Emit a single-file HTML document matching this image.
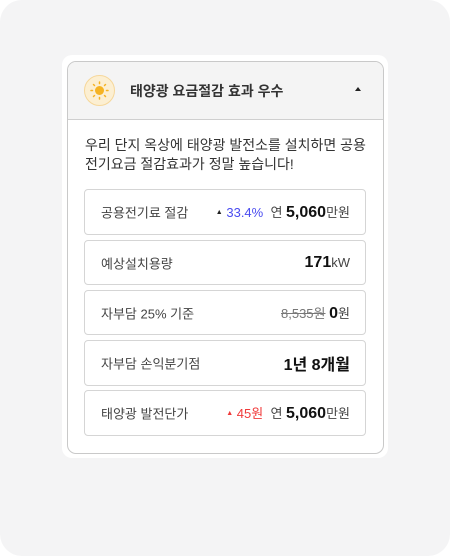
<!DOCTYPE html>
<html><head><meta charset="utf-8"><style>
*{box-sizing:border-box;margin:0;padding:0}
html,body{width:450px;height:556px;background:#fff;font-family:"Liberation Sans","Noto Sans CJK KR",sans-serif;color:#222}
.bg{position:absolute;left:0;top:0;width:450px;height:556px;background:#f4f4f5;border-radius:22px}
.outer{position:absolute;left:62px;top:55px;width:326px;height:403px;background:#fff;border-radius:10px}
.card{position:absolute;left:67px;top:61px;width:317px;height:393px;border:1px solid #c9c9c9;border-radius:9px;overflow:hidden;background:#fff}
.hd{height:58px;background:#f4f4f4;border-bottom:1px solid #cfcfcf;position:relative}
.ic{position:absolute;left:16px;top:13px;width:31px;height:31px;border-radius:50%;background:#fcefd2;border:1px solid #f6d79a}
.ti{position:absolute;left:62px;top:19px;font-size:14px;font-weight:bold;color:#333}
.car{position:absolute;right:22px;top:25px;width:0;height:0;border-left:3px solid transparent;border-right:3px solid transparent;border-bottom:4px solid #222}
.desc{position:absolute;left:18px;top:75px;font-size:14px;line-height:19px;color:#333}
.row{position:absolute;left:17px;width:282px;border:1px solid #d5d5d5;border-radius:4px;background:#fff}
.l{position:absolute;left:16px;top:50%;transform:translateY(-50%);font-size:13px;color:#444}
.r{position:absolute;right:15px;top:50%;transform:translateY(-50%);font-size:13px;color:#444;white-space:nowrap}
.b{font-size:16px;font-weight:bold;color:#111}
</style></head><body>
<div class="bg"></div>
<div class="outer"></div>
<div class="card">
 <div class="hd"><div class="ic"><svg width="29" height="29" viewBox="0 0 29 29"><circle cx="14.5" cy="14.5" r="4.5" fill="#f5b324"/><g stroke="#f5b324" stroke-width="1.5" stroke-linecap="round"><path d="M14.5 6v1.5M14.5 21.5V23M6 14.5h1.5M21.5 14.5H23M8.5 8.5l1 1M19.5 19.5l1 1M8.5 20.5l1-1M19.5 9.5l1-1"/></g></svg></div><div class="ti">태양광 요금절감 효과 우수</div><div class="car"></div></div>
</div>
<div style="position:absolute;left:67px;top:61px;width:317px;height:393px">
 <div class="desc">우리 단지 옥상에 태양광 발전소를 설치하면 공용<br>전기요금 절감효과가 정말 높습니다!</div>
 <div class="row" style="top:128px;height:46px"><div class="l">공용전기료 절감</div><div class="r"><span style="font-size:7px;vertical-align:3px;color:#222">▲</span> <span style="color:#4a4cf0">33.4%</span>&nbsp; 연 <span class="b">5,060</span>만원</div></div>
 <div class="row" style="top:179px;height:45px"><div class="l">예상설치용량</div><div class="r"><span class="b">171</span>kW</div></div>
 <div class="row" style="top:229px;height:45px"><div class="l">자부담 25% 기준</div><div class="r"><span style="text-decoration:line-through;color:#777">8,535원</span> <span class="b">0</span>원</div></div>
 <div class="row" style="top:279px;height:46px"><div class="l">자부담 손익분기점</div><div class="r"><span class="b">1년 8개월</span></div></div>
 <div class="row" style="top:329px;height:46px"><div class="l">태양광 발전단가</div><div class="r"><span style="color:#f03a3a"><span style="font-size:7px;vertical-align:3px">▲</span> 45원</span>&nbsp; 연 <span class="b">5,060</span>만원</div></div>
</div>
</body></html>
